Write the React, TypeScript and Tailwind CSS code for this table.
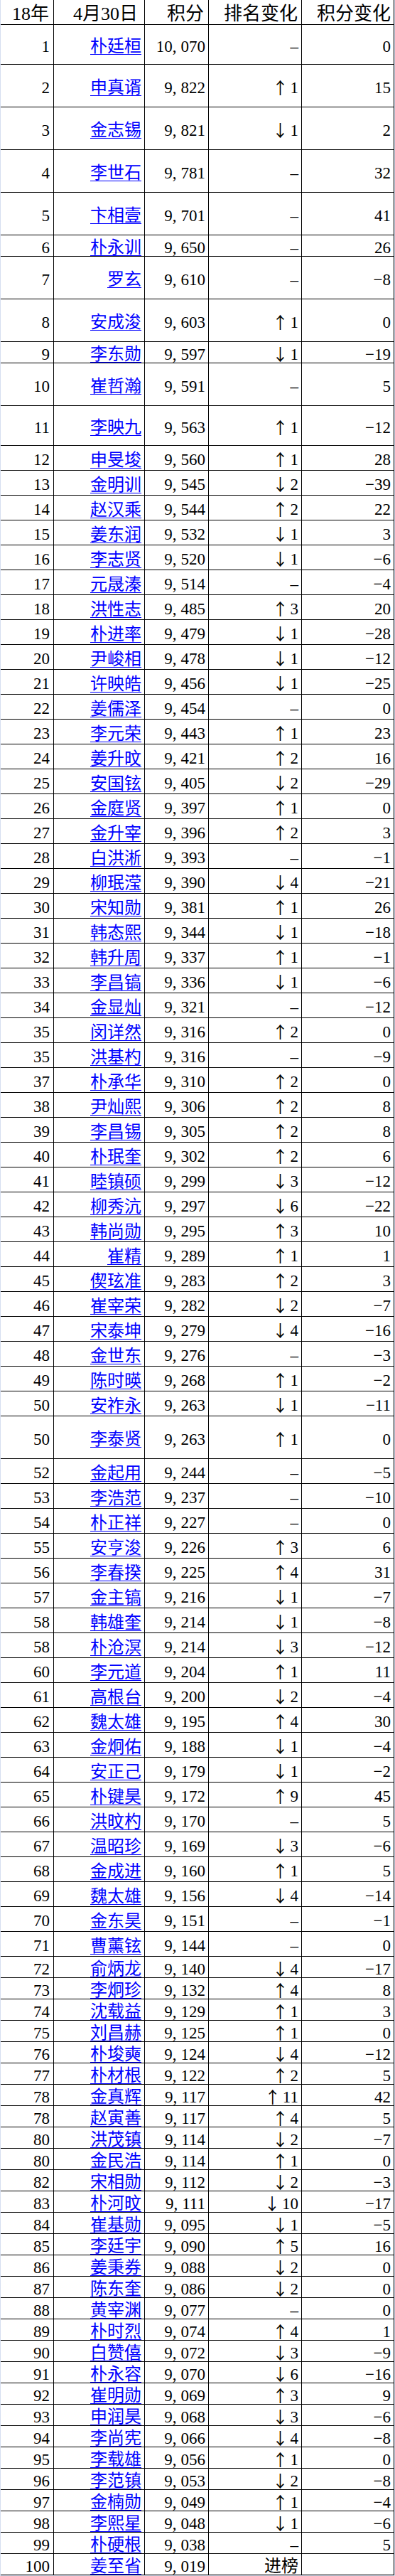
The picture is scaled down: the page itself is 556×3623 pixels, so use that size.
import React from 'react';

// rank, name, score, change (u = up, d = down, - = none), score diff
type Row = [string, string, string, string, string];

const rows: Row[] = [
    ['1', '朴廷桓', '10,070', '-', '0'],
    ['2', '申真谞', '9,822', 'u1', '15'],
    ['3', '金志锡', '9,821', 'd1', '2'],
    ['4', '李世石', '9,781', '-', '32'],
    ['5', '卞相壹', '9,701', '-', '41'],
    ['6', '朴永训', '9,650', '-', '26'],
    ['7', '罗玄', '9,610', '-', '-8'],
    ['8', '安成浚', '9,603', 'u1', '0'],
    ['9', '李东勋', '9,597', 'd1', '-19'],
    ['10', '崔哲瀚', '9,591', '-', '5'],
    ['11', '李映九', '9,563', 'u1', '-12'],
    ['12', '申旻埈', '9,560', 'u1', '28'],
    ['13', '金明训', '9,545', 'd2', '-39'],
    ['14', '赵汉乘', '9,544', 'u2', '22'],
    ['15', '姜东润', '9,532', 'd1', '3'],
    ['16', '李志贤', '9,520', 'd1', '-6'],
    ['17', '元晟溱', '9,514', '-', '-4'],
    ['18', '洪性志', '9,485', 'u3', '20'],
    ['19', '朴进率', '9,479', 'd1', '-28'],
    ['20', '尹峻相', '9,478', 'd1', '-12'],
    ['21', '许映皓', '9,456', 'd1', '-25'],
    ['22', '姜儒泽', '9,454', '-', '0'],
    ['23', '李元荣', '9,443', 'u1', '23'],
    ['24', '姜升旼', '9,421', 'u2', '16'],
    ['25', '安国铉', '9,405', 'd2', '-29'],
    ['26', '金庭贤', '9,397', 'u1', '0'],
    ['27', '金升宰', '9,396', 'u2', '3'],
    ['28', '白洪淅', '9,393', '-', '-1'],
    ['29', '柳珉滢', '9,390', 'd4', '-21'],
    ['30', '宋知勋', '9,381', 'u1', '26'],
    ['31', '韩态熙', '9,344', 'd1', '-18'],
    ['32', '韩升周', '9,337', 'u1', '-1'],
    ['33', '李昌镐', '9,336', 'd1', '-6'],
    ['34', '金显灿', '9,321', '-', '-12'],
    ['35', '闵详然', '9,316', 'u2', '0'],
    ['35', '洪基杓', '9,316', '-', '-9'],
    ['37', '朴承华', '9,310', 'u2', '0'],
    ['38', '尹灿熙', '9,306', 'u2', '8'],
    ['39', '李昌锡', '9,305', 'u2', '8'],
    ['40', '朴珉奎', '9,302', 'u2', '6'],
    ['41', '睦镇硕', '9,299', 'd3', '-12'],
    ['42', '柳秀沆', '9,297', 'd6', '-22'],
    ['43', '韩尚勋', '9,295', 'u3', '10'],
    ['44', '崔精', '9,289', 'u1', '1'],
    ['45', '偰玹准', '9,283', 'u2', '3'],
    ['46', '崔宰荣', '9,282', 'd2', '-7'],
    ['47', '宋泰坤', '9,279', 'd4', '-16'],
    ['48', '金世东', '9,276', '-', '-3'],
    ['49', '陈时暎', '9,268', 'u1', '-2'],
    ['50', '安祚永', '9,263', 'd1', '-11'],
    ['50', '李泰贤', '9,263', 'u1', '0'],
    ['52', '金起用', '9,244', '-', '-5'],
    ['53', '李浩范', '9,237', '-', '-10'],
    ['54', '朴正祥', '9,227', '-', '0'],
    ['55', '安亨浚', '9,226', 'u3', '6'],
    ['56', '李春揆', '9,225', 'u4', '31'],
    ['57', '金主镐', '9,216', 'd1', '-7'],
    ['58', '韩雄奎', '9,214', 'd1', '-8'],
    ['58', '朴沧溟', '9,214', 'd3', '-12'],
    ['60', '李元道', '9,204', 'u1', '11'],
    ['61', '高根台', '9,200', 'd2', '-4'],
    ['62', '魏太雄', '9,195', 'u4', '30'],
    ['63', '金炯佑', '9,188', 'd1', '-4'],
    ['64', '安正己', '9,179', 'd1', '-2'],
    ['65', '朴键昊', '9,172', 'u9', '45'],
    ['66', '洪旼杓', '9,170', '-', '5'],
    ['67', '温昭珍', '9,169', 'd3', '-6'],
    ['68', '金成进', '9,160', 'u1', '5'],
    ['69', '魏太雄', '9,156', 'd4', '-14'],
    ['70', '金东昊', '9,151', '-', '-1'],
    ['71', '曹薰铉', '9,144', '-', '0'],
    ['72', '俞炳龙', '9,140', 'd4', '-17'],
    ['73', '李炯珍', '9,132', 'u4', '8'],
    ['74', '沈载益', '9,129', 'u1', '3'],
    ['75', '刘昌赫', '9,125', 'u1', '0'],
    ['76', '朴埈奭', '9,124', 'd4', '-12'],
    ['77', '朴材根', '9,122', 'u2', '5'],
    ['78', '金真辉', '9,117', 'u11', '42'],
    ['78', '赵寅善', '9,117', 'u4', '5'],
    ['80', '洪茂镇', '9,114', 'd2', '-7'],
    ['80', '金民浩', '9,114', 'u1', '0'],
    ['82', '宋相勋', '9,112', 'd2', '-3'],
    ['83', '朴河旼', '9,111', 'd10', '-17'],
    ['84', '崔基勋', '9,095', 'd1', '-5'],
    ['85', '李廷宇', '9,090', 'u5', '16'],
    ['86', '姜秉券', '9,088', 'd2', '0'],
    ['87', '陈东奎', '9,086', 'd2', '0'],
    ['88', '黄宰渊', '9,077', '-', '0'],
    ['89', '朴时烈', '9,074', 'u4', '1'],
    ['90', '白赞僖', '9,072', 'd3', '-9'],
    ['91', '朴永容', '9,070', 'd6', '-16'],
    ['92', '崔明勋', '9,069', 'u3', '9'],
    ['93', '申润昊', '9,068', 'd3', '-6'],
    ['94', '李尚宪', '9,066', 'd4', '-8'],
    ['95', '李载雄', '9,056', 'u1', '0'],
    ['96', '李范镇', '9,053', 'd2', '-8'],
    ['97', '金楠勋', '9,049', 'u1', '-4'],
    ['98', '李熙星', '9,048', 'd1', '-6'],
    ['99', '朴硬根', '9,038', '-', '5'],
    ['100', '姜至省', '9,019', '进榜', ''],
];

const tall = [1, 2, 3, 4, 6, 7, 9, 50];

const rowHeight = (i: number) => {
    if (i === 0 || i === 10) return 'h-[56px]';
    if (tall.includes(i)) return 'h-[60px]';
    if (i === 5 || i === 8 || i >= 71) return 'h-[30px]';
    return 'h-[35px]';
};

const cell = 'flex items-center justify-end border-r border-black pr-[4px] pt-[5px]';

const Score = ({ value }: { value: string }) => {
    const [a, b] = value.split(',');
    return (
        <span>
            {a}
            <span className="mr-[6px]">,</span>
            {b}
        </span>
    );
};

const Change = ({ value }: { value: string }) => {
    if (value === '-') return <span>–</span>;
    if (value === '进榜') return <span className="text-[24px]">进榜</span>;
    const arrow = value[0] === 'u' ? '↑' : '↓';
    return (
        <span className="flex items-center">
            <span className="inline-block w-[24px] mr-[2px] text-center font-['Noto_Sans_CJK_SC',sans-serif] text-[23px] -mt-[2px]">{arrow}</span>
            <span>{value.slice(1)}</span>
        </span>
    );
};

export default function App() {
    return (
        <div className="min-h-[3623px] bg-[#d6def0] px-px pb-px">
            <div className="bg-white text-black text-[23px] leading-none font-['Liberation_Serif','Noto_Sans_CJK_SC',serif]">
                <div className="flex h-[35px] border-b border-black text-[26px]">
                    <div className={`${cell} w-[75px] pr-[6px]`}>18年</div>
                    <div className={`${cell} w-[128px] pr-[9px]`}>4月30日</div>
                    <div className={`${cell} w-[90px] pr-[6px]`}>积分</div>
                    <div className={`${cell} w-[131px] pr-[5px]`}>排名变化</div>
                    <div className={`${cell} w-[130px] pr-[4px]`}>积分变化</div>
                </div>
                {rows.map((r, i) => (
                    <div key={i} className={`flex border-b border-black ${rowHeight(i)}`}>
                        <div className={`${cell} w-[75px] pr-[5px]`}>{r[0]}</div>
                        <div className={`${cell} w-[128px] pr-[3px] pt-[3px]`}>
                            <a className="text-[24px] text-[#0000ff] underline decoration-1 underline-offset-[3px] cursor-pointer">{r[1]}</a>
                        </div>
                        <div className={`${cell} w-[90px]`}>
                            <Score value={r[2]} />
                        </div>
                        <div className={`${cell} w-[131px]`}>
                            <Change value={r[3]} />
                        </div>
                        <div className={`${cell} w-[130px] pr-[3px]`}>{r[4].replace('-', '−')}</div>
                    </div>
                ))}
            </div>
        </div>
    );
}
